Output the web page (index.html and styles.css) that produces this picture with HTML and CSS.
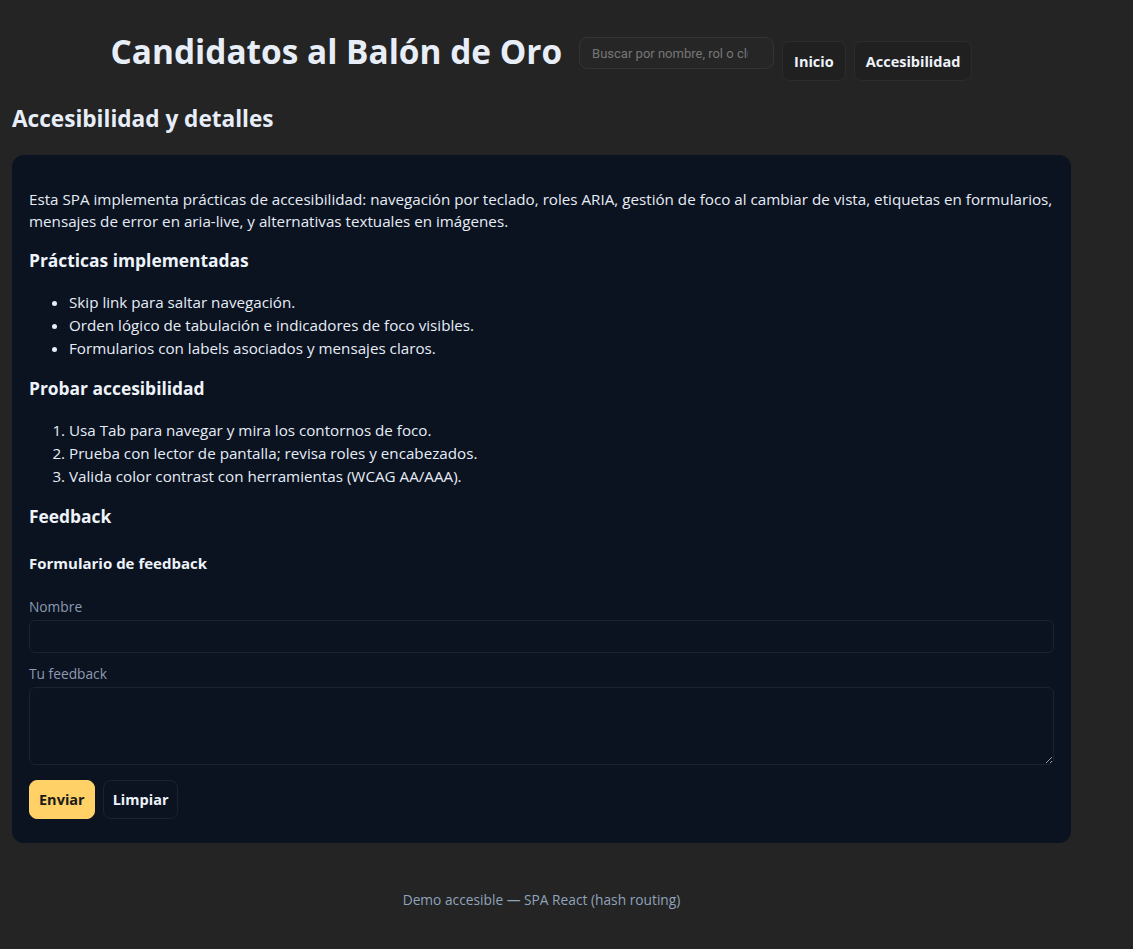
FILE: index.html
```html
<!DOCTYPE html>
<html lang="es">
<head>
<meta charset="utf-8">
<title>Candidatos al Balón de Oro</title>
<link rel="stylesheet" href="styles.css">
</head>
<body>
<div class="app">
  <header class="site-header">
    <h1 class="site-title">Candidatos al Balón de Oro</h1>
    <input class="search" type="search" placeholder="Buscar por nombre, rol o club" aria-label="Buscar">
    <nav class="nav">
      <a class="nav-btn" href="#/">Inicio</a>
      <a class="nav-btn" href="#/accesibilidad">Accesibilidad</a>
    </nav>
  </header>
  <main>
    <h2 class="page-title">Accesibilidad y detalles</h2>
    <section class="card">
      <p class="intro">Esta SPA implementa prácticas de accesibilidad: navegación por teclado, roles ARIA, gestión de foco al cambiar de vista, etiquetas en formularios, mensajes de error en aria-live, y alternativas textuales en imágenes.</p>
      <h3 class="sec-title">Prácticas implementadas</h3>
      <ul class="list">
        <li>Skip link para saltar navegación.</li>
        <li>Orden lógico de tabulación e indicadores de foco visibles.</li>
        <li>Formularios con labels asociados y mensajes claros.</li>
      </ul>
      <h3 class="sec-title">Probar accesibilidad</h3>
      <ol class="list">
        <li>Usa Tab para navegar y mira los contornos de foco.</li>
        <li>Prueba con lector de pantalla; revisa roles y encabezados.</li>
        <li>Valida color contrast con herramientas (WCAG AA/AAA).</li>
      </ol>
      <h3 class="sec-title">Feedback</h3>
      <form class="form">
        <h4 class="form-title">Formulario de feedback</h4>
        <label class="label" for="nombre">Nombre</label>
        <input class="field" id="nombre" type="text">
        <label class="label" for="fb">Tu feedback</label>
        <textarea class="field area" id="fb"></textarea>
        <div class="actions">
          <button class="btn primary" type="submit">Enviar</button>
          <button class="btn ghost" type="reset">Limpiar</button>
        </div>
      </form>
    </section>
  </main>
  <footer class="footer">Demo accesible — SPA React (hash routing)</footer>
</div>
</body>
</html>
```

FILE: styles.css
```css
* { box-sizing: border-box; }
html, body { margin: 0; padding: 0; }
body {
  background: #242424;
  color: #e6edf6;
  font-family: "Open Sans", "Noto Sans", sans-serif;
  font-size: 15.2px;
  line-height: 1.5;
}
.app {
  width: 1059px;
  margin-left: 12px;
}
.site-header {
  display: flex;
  justify-content: center;
  align-items: flex-start;
  gap: 17px;
  padding-top: 26px;
}
.site-title {
  margin: 0;
  font-size: 33.4px;
  line-height: 50px;
  font-weight: 700;
  color: #e8eef8;
}
.search {
  margin-top: 11px;
  width: 195px;
  height: 32px;
  padding: 0 12px;
  background: #262626;
  border: 1px solid #343434;
  border-radius: 8px;
  color: #ddd;
  font-family: "Roboto", "Liberation Sans", sans-serif;
  font-size: 13px;
}
.search::placeholder { color: #767676; }
.nav {
  display: flex;
  gap: 8px;
  margin-top: 15px;
  margin-left: -9px;
}
.nav-btn {
  display: inline-flex;
  align-items: center;
  height: 40px;
  padding: 1px 11px 0;
  background: #202020;
  border: 1px solid #2c2c2c;
  border-radius: 8px;
  color: #eef3fa;
  font-weight: 700;
  font-size: 14.5px;
  text-decoration: none;
}
.page-title {
  margin: 23px 0 21px;
  font-size: 22.6px;
  line-height: 30px;
  font-weight: 700;
  color: #e8eef8;
}
.card {
  background: #0b1220;
  border-radius: 12px;
  padding: 25px 17px 24px;
}
.intro {
  margin: 8px 0 14px;
  line-height: 22px;
}
.sec-title {
  margin: 16px 0 19px;
  font-size: 17.4px;
  line-height: 24px;
  font-weight: 700;
  color: #eef3fa;
}
.list {
  margin: 0;
  padding-left: 40px;
  line-height: 23px;
}
.form { display: flex; flex-direction: column; }
.form-title {
  margin: 6px 0 25px;
  font-size: 15px;
  line-height: 20px;
  font-weight: 700;
  color: #eef3fa;
}
.label {
  font-size: 13.75px;
  line-height: 18px;
  color: #8b9bb0;
  margin-bottom: 4px;
}
.field {
  display: block;
  width: 100%;
  height: 33px;
  background: #0b1220;
  border: 1px solid #1b2232;
  border-radius: 6px;
  color: #e6edf6;
  font: inherit;
  margin-bottom: 12px;
}
.area { height: 78px; resize: vertical; margin-bottom: 15px; }
.actions { display: flex; gap: 8px; }
.btn {
  height: 39px;
  padding: 0 9px;
  border-radius: 8px;
  font-family: inherit;
  font-size: 14.5px;
  font-weight: 700;
  cursor: pointer;
}
.primary {
  background: #ffd166;
  border: 1px solid #ffd166;
  color: #1a1a1a;
}
.ghost {
  background: #0b1220;
  border: 1px solid #1b2232;
  color: #eef3fa;
}
.footer {
  text-align: center;
  margin-top: 47px;
  font-size: 13.75px;
  line-height: 20px;
  color: #8fa3bb;
}
```
